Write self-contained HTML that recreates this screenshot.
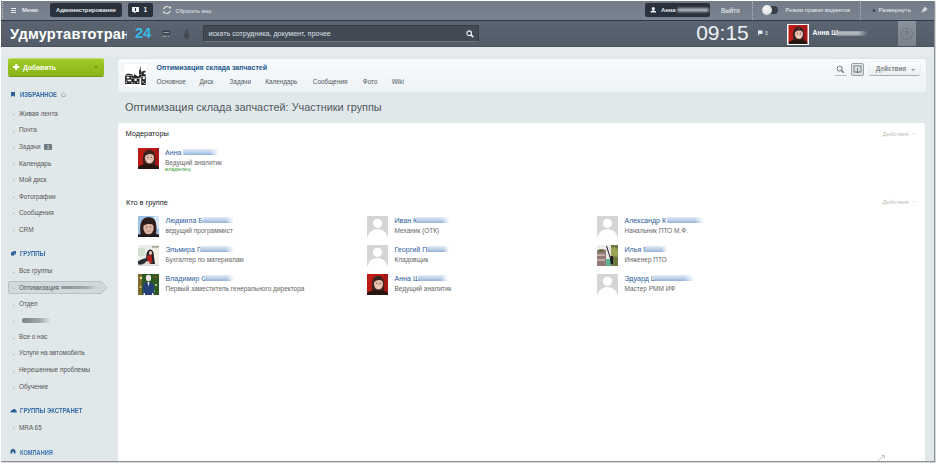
<!DOCTYPE html>
<html><head><meta charset="utf-8">
<style>
*{box-sizing:border-box;margin:0;padding:0}
html,body{width:937px;height:464px;overflow:hidden;background:#fff;font-family:"Liberation Sans",sans-serif}
.a{position:absolute;white-space:nowrap;line-height:1}
#page{position:absolute;left:0;top:0;width:934px;height:461px;overflow:hidden}
.tb{color:#e9edf0;font-weight:bold}
.dbtn{position:absolute;background:#29313c;border-radius:2px}
.side{font-size:6.4px;color:#555}
.dot{position:absolute;width:1px;height:1px;background:#a0a7ab}
.sh{font-size:6.9px;font-weight:bold;color:#336aa6;transform-origin:0 0;transform:scaleX(0.86)}
.nm{font-size:7.1px;color:#2a5d9a}
.ps{font-size:6.5px;color:#666}
.av{position:absolute;width:21px;height:21px;background:#d5d5d5;overflow:hidden}
.av svg{display:block}
.blur{position:absolute;height:4px;border-radius:2px;background:#a9c1de;filter:blur(0.9px)}
.bn{height:5.5px;background:linear-gradient(#e2eaf4,#b9cde6 60%,#93b2da);filter:blur(0.7px);border-radius:1px;-webkit-mask-image:linear-gradient(to right,#000 75%,transparent)}
.gm{font-size:6.4px;color:#505860}
</style></head><body>
<svg width="0" height="0" style="position:absolute"><defs><filter id="bl" x="-10%" y="-10%" width="120%" height="120%"><feGaussianBlur stdDeviation="0.45"/></filter><clipPath id="cp"><rect width="21" height="21"/></clipPath></defs></svg>
<div id="page">
  <!-- page background -->
  <div class="a" style="left:1px;top:1px;width:933px;height:460px;background:#e1e8ea"></div><div class="a" style="left:1px;top:47px;width:933px;height:11px;background:linear-gradient(#e6ebee,#e3e9ec)"></div>
  <!-- TOP BAR -->
  <div class="a" style="left:1px;top:1px;width:933px;height:19px;background:linear-gradient(#727c88,#7a8490)"></div>
  <div class="a" style="left:1px;top:20px;width:933px;height:1px;background:#303845"></div>
  <div class="a" style="left:2px;top:2px;height:17px;border-left:1px dotted #c3c8ce"></div>
  <svg class="a" style="left:11px;top:8px" width="6" height="5"><rect x="0" y="0" width="5" height="1" fill="#e4e8ec"/><rect x="0" y="2" width="5" height="1" fill="#e4e8ec"/><rect x="0" y="4" width="5" height="1" fill="#e4e8ec"/></svg>
  <div class="a tb" style="left:22px;top:8.3px;font-size:5.7px;color:#e4e9ee">Меню</div>
  <div class="dbtn" style="left:50px;top:3px;width:72px;height:14px"></div>
  <div class="a tb" style="left:56px;top:8.3px;font-size:5.8px;color:#e6eaee">Администрирование</div>
  <div class="dbtn" style="left:128px;top:3px;width:25px;height:14px"></div>
  <svg class="a" style="left:132px;top:7px" width="8" height="7"><rect x="0" y="0" width="7" height="5" fill="#eef1f3"/><path d="M2 5 L4 5 L2.5 6.5Z" fill="#eef1f3"/><rect x="3" y="1" width="1" height="3" fill="#29313c"/></svg>
  <div class="a tb" style="left:143.5px;top:7.3px;font-size:6.5px;color:#f0f2f4">1</div>
  <svg class="a" style="left:162px;top:5px" width="10" height="10"><path d="M1.6 4.3 A3.6 3.6 0 0 1 8 3" fill="none" stroke="#dfe3e7" stroke-width="1.1"/><path d="M8.4 5.7 A3.6 3.6 0 0 1 2 7" fill="none" stroke="#dfe3e7" stroke-width="1.1"/><path d="M6.5 3.2 L9 3.6 L8.7 1Z" fill="#dfe3e7"/><path d="M3.5 6.8 L1 6.4 L1.3 9Z" fill="#dfe3e7"/></svg>
  <div class="a" style="left:175.5px;top:9px;font-size:5.5px;color:#e8ecf0">Сбросить кеш</div>

  <div class="dbtn" style="left:645px;top:3px;width:65px;height:14px"></div>
  <svg class="a" style="left:650px;top:7px" width="7" height="6"><circle cx="3.3" cy="1.6" r="1.5" fill="#eef1f3"/><rect x="2.4" y="1.5" width="1.8" height="3" fill="#eef1f3"/><rect x="0.6" y="4" width="5.4" height="1.5" fill="#eef1f3"/></svg>
  <div class="a tb" style="left:661px;top:8px;font-size:5.8px;color:#e6eaee">Анна</div>
  <div class="blur" style="left:677px;top:8px;width:32px;height:4px;background:#aab1ba"></div>
  <div class="a" style="left:721px;top:8px;font-size:6.3px;color:#eef1f4">Выйти</div>
  <div class="a" style="left:752px;top:2px;height:18px;border-left:1px dotted #b0b7be"></div>
  <div class="a" style="left:762px;top:6px;width:16px;height:8px;background:#383f49;border-radius:4px"></div>
  <div class="a" style="left:761.5px;top:5px;width:10px;height:10px;background:radial-gradient(circle at 40% 35%,#fafafa,#cfd2d6);border-radius:50%"></div>
  <div class="a" style="left:785.5px;top:7.6px;font-size:5.75px;color:#e6eaee">Режим правки виджетов</div>
  <div class="a" style="left:860px;top:2px;height:18px;border-left:1px dotted #b0b7be"></div>
  <svg class="a" style="left:873px;top:9px" width="3" height="3"><path d="M0 0 L3 1.5 L0 3Z" fill="#2f3640"/></svg>
  <div class="a" style="left:878.5px;top:7px;font-size:6.1px;color:#eef1f4">Развернуть</div>
  <svg class="a" style="left:919.5px;top:6px" width="8" height="7"><path d="M4.5 0.3 L7.7 3.3 L6.6 3.8 L5.4 5.6 L4.8 5 L1 7 L3 3.6 L2.5 3 L4.3 1.7Z" fill="#d5d9dd"/></svg>

  <!-- HEADER -->
  <div class="a" style="left:1px;top:21px;width:933px;height:26px;background:linear-gradient(#5b6572,#525c69)"></div>
  <div class="a" style="left:1px;top:46px;width:933px;height:1px;background:#4a525d"></div>
  <div class="a" style="left:1px;top:21px;width:126px;height:26px;overflow:hidden">
    <div class="a" style="left:9.1px;top:6px;font-size:14.6px;font-weight:bold;color:#fff;letter-spacing:0.2px">Удмуртавтотранс</div>
  </div>
  <div class="a" style="left:135px;top:26.1px;font-size:14.6px;font-weight:bold;color:#3cb8e6">24</div>
  <div class="a" style="left:0;top:21px"></div>
  <svg class="a" style="left:162px;top:30px" width="9" height="9"><rect x="0.5" y="0.5" width="7.5" height="4" fill="#39404a"/><rect x="1.5" y="2" width="5.5" height="1" fill="#9aa1a9"/><rect x="0.5" y="6" width="4.5" height="1" fill="#8e959d"/><rect x="6" y="6" width="1.5" height="1" fill="#8e959d"/></svg>
  <svg class="a" style="left:182px;top:29px" width="9" height="11"><circle cx="4.5" cy="1.5" r="1" fill="#353c46"/><path d="M4.5 2 C2.5 2 2.3 4 2.3 6 L1 8.5 L8 8.5 L6.7 6 C6.7 4 6.5 2 4.5 2Z" fill="#424953"/><circle cx="4.5" cy="9.5" r="0.9" fill="#3a414b"/></svg>
  <div class="a" style="left:203px;top:25px;width:276px;height:17px;background:#414955;border:1px solid #363d47;border-bottom-color:#6c747e;border-radius:1px"></div>
  <div class="a" style="left:208.5px;top:30.5px;font-size:7.15px;color:#dde2e7">искать сотрудника, документ, прочее</div>
  <svg class="a" style="left:466px;top:29.5px" width="9" height="8"><circle cx="3.2" cy="3.2" r="2.3" fill="none" stroke="#eef0f2" stroke-width="1.2"/><path d="M4.8 4.8 L7.3 7.2" stroke="#eef0f2" stroke-width="1.6"/></svg>

  <div class="a" style="left:696.2px;top:21.5px;font-size:21px;color:#eef1f4">09:15</div>
  <svg class="a" style="left:757px;top:30px" width="12" height="6"><rect x="1" y="0.5" width="4.5" height="3.5" fill="#e6e9ec"/><rect x="1" y="0.5" width="0.8" height="5" fill="#e6e9ec"/><text x="8" y="5" font-size="5" fill="#e6e9ec" font-family="Liberation Sans">0</text></svg>
  <div class="a" style="left:786.5px;top:23.5px;width:22px;height:21px;background:#fdfdfd;padding:1px">
    <svg width="20" height="19" viewBox="0 0 21 21"><g filter="url(#bl)" clip-path="url(#cp)"><rect x="-1" y="-1" width="23" height="23" fill="#bd1d17"/><rect x="17" y="-1" width="5" height="23" fill="#a51612"/><path d="M5.5 17 C4 11 5 5 7.5 3 C10 1 14 1.5 15.8 4 C17.5 6.5 17.5 12 17 17Z" fill="#3d2420"/><ellipse cx="11.5" cy="9.8" rx="4.6" ry="5.8" fill="#e3bcab"/><path d="M7 6.5 C8.5 3.2 13.5 2.8 16 6 L15.6 7.5 C13.5 5.5 9.5 5.5 7.3 8.2Z" fill="#3d2420"/><path d="M-1 22 V19.5 C2 17 6 16 10.5 16 C15 16 19 17 22 19.5 V22Z" fill="#28180f"/><circle cx="9.8" cy="9.2" r="0.55" fill="#4a2c26"/><circle cx="13.2" cy="9.2" r="0.55" fill="#4a2c26"/><path d="M9.8 12.6 Q11.5 13.8 13.2 12.6" stroke="#fff" stroke-width="0.6" fill="none"/></g></svg>
  </div>
  <div class="a tb" style="left:812.5px;top:29.6px;font-size:6.8px;color:#fafbfc">Анна Ш</div>
  <div class="blur" style="left:835px;top:30.8px;width:33px;height:5px;background:linear-gradient(#c9ced4,#9aa2ab);-webkit-mask-image:linear-gradient(to right,#000 70%,transparent)"></div>
  <div class="a" style="left:898px;top:21px;width:18px;height:25px;background:linear-gradient(#8a929b,#7a828c)"></div>
  <div class="a" style="left:901px;top:27.5px;width:12px;height:12px;border:1px dotted #5d656f;border-radius:50%"></div>
  <div class="a" style="left:904.3px;top:29.5px;font-size:8px;color:#4f5660">?</div>

  <!-- SIDEBAR -->
  <div class="a" style="left:8px;top:58px;width:96px;height:17.5px;border-radius:2px;background:linear-gradient(#a2cb2b,#88b416);border-top:1px solid #c0dc6a;box-shadow:0 1px 0 #6e9412"></div>
  <svg class="a" style="left:13px;top:64px" width="7" height="6"><rect x="2.2" y="0" width="2" height="6" fill="#fff"/><rect x="0" y="2" width="6.3" height="2" fill="#fff"/></svg>
  <div class="a" style="left:23px;top:64.9px;font-size:6.8px;font-weight:bold;color:#fbfdf2">Добавить</div>
  <div class="a" style="left:94px;top:66px;width:0;height:0;border-left:2.2px solid transparent;border-right:2.2px solid transparent;border-top:2.2px solid #6b9214"></div>

  <svg class="a" style="left:11px;top:92px" width="5" height="6"><path d="M0 0 H4 V5 L2 3.6 L0 5Z" fill="#2b5f94"/></svg>
  <div class="a sh" style="left:19.6px;top:91.9px">ИЗБРАННОЕ</div>
  <svg class="a" style="left:61px;top:92px" width="5" height="5"><path d="M2.5 0.5 L4.5 2.2 L4 4.5 L1 4.5 L0.5 2.2Z" fill="none" stroke="#a2aaaf" stroke-width="0.9"/></svg>

  <div class="dot" style="left:13px;top:114px"></div><div class="a side" style="left:19px;top:110.8px">Живая лента</div>
  <div class="dot" style="left:13px;top:131px"></div><div class="a side" style="left:19px;top:127.3px">Почта</div>
  <div class="dot" style="left:13px;top:147px"></div><div class="a side" style="left:19px;top:143.8px">Задачи</div>
  <div class="a" style="left:44.2px;top:144px;width:7.7px;height:6px;background:#737b81;border-radius:1px;font-size:5px;color:#dfe3e6;text-align:center;line-height:6px">1</div>
  <div class="dot" style="left:13px;top:164px"></div><div class="a side" style="left:19px;top:160.5px">Календарь</div>
  <div class="dot" style="left:13px;top:180px"></div><div class="a side" style="left:19px;top:177.1px">Мой диск</div>
  <div class="dot" style="left:13px;top:197px"></div><div class="a side" style="left:19px;top:193.7px">Фотографии</div>
  <div class="dot" style="left:13px;top:213px"></div><div class="a side" style="left:19px;top:210.3px">Сообщения</div>
  <div class="dot" style="left:13px;top:230px"></div><div class="a side" style="left:19px;top:226.8px">CRM</div>

  <svg class="a" style="left:11px;top:251px" width="5" height="5"><rect x="0" y="1.2" width="3.3" height="3.3" fill="#2b5f94"/><rect x="1.7" y="0" width="3.3" height="3.3" fill="#3a6ea3"/></svg>
  <div class="a sh" style="left:19.5px;top:250.9px">ГРУППЫ</div>
  <div class="dot" style="left:13px;top:272px"></div><div class="a side" style="left:19px;top:268.3px">Все группы</div>
  <svg class="a" style="left:8px;top:281px" width="100" height="14"><path d="M2 0.5 H93 L99 6.5 L93 12.5 H2 A1.5 1.5 0 0 1 0.5 11 V2 A1.5 1.5 0 0 1 2 0.5Z" fill="#d2d9dc" stroke="#b9c1c5" stroke-width="1"/></svg>
  <div class="dot" style="left:13px;top:288px"></div><div class="a side" style="left:19px;top:284.8px">Оптимизация</div>
  <div class="blur" style="left:61px;top:285.5px;width:36px;height:3.5px;background:linear-gradient(to right,#8d9499,#a3aaaf 70%,rgba(180,186,190,0));filter:blur(0.7px)"></div>
  <div class="dot" style="left:13px;top:305px"></div><div class="a side" style="left:19px;top:301.3px">Отдел</div>
  <div class="dot" style="left:13px;top:321px"></div><div class="blur" style="left:21.5px;top:318px;width:29px;height:4.5px;background:linear-gradient(to right,#7d8489,#a0a7ac 60%,rgba(190,196,200,0));filter:blur(0.6px)"></div>
  <div class="dot" style="left:13px;top:338px"></div><div class="a side" style="left:19px;top:334.3px">Все о нас</div>
  <div class="dot" style="left:13px;top:354px"></div><div class="a side" style="left:19px;top:350.3px">Услуги на автомобиль</div>
  <div class="dot" style="left:13px;top:371px"></div><div class="a side" style="left:19px;top:367.1px">Нерешенные проблемы</div>
  <div class="dot" style="left:13px;top:388px"></div><div class="a side" style="left:19px;top:383.8px">Обучение</div>

  <svg class="a" style="left:10px;top:408px" width="7" height="5"><path d="M0.5 4.5 C0.5 2.5 1.5 2 2.5 2 C3 0.5 5.5 0.5 6 2.3 C6.6 2.5 6.8 3.5 6.8 4.5Z" fill="#2b5f94"/></svg>
  <div class="a sh" style="left:20px;top:408.1px;transform:scaleX(0.865)">ГРУППЫ ЭКСТРАНЕТ</div>
  <div class="dot" style="left:13px;top:428px"></div><div class="a side" style="left:19px;top:425.3px">MRA 65</div>
  <svg class="a" style="left:10px;top:448px" width="6" height="6"><path d="M0.5 5.5 V2.5 L3 0.5 L5.5 2.5 V5.5 H3.8 V3.8 H2.2 V5.5Z" fill="#2b5f94"/></svg>
  <div class="a sh" style="left:20px;top:449.6px;transform:scaleX(0.82);color:#3d74b0">КОМПАНИЯ</div>

  <!-- GROUP HEADER PANEL -->
  <div class="a" style="left:118px;top:59px;width:808px;height:32.5px;background:linear-gradient(#f9fbfc,#edf2f6);border-radius:3px;box-shadow:0 -0.5px 0 0.5px #dde3e6"></div>
  <div class="a" style="left:123px;top:63px;width:25px;height:25px;background:#fff;border:1px solid #f0f2f3"></div>
  <svg class="a" style="left:123px;top:63px" width="25" height="25" viewBox="0 0 25 25">
    <g fill="#262626">
      <path d="M2 21 V13.5 C2 11.5 3.5 10.6 5.5 10.8 C8 10.6 10 11.5 10.5 13 V21Z"/>
      <path d="M10 21 V14 L11 12.5 L11.5 10.5 L12.2 12.5 L13 11 L13.5 13 L16.5 13.5 V21Z"/>
      <path d="M16 14.5 V8 L16.6 7 L17.2 2.5 L17.8 7 L18.4 8 V14.5Z"/>
      <path d="M18.2 22 V10.5 C18.5 8.5 20 7.5 22.5 7.8 V9.2 C21 9.2 20.6 10 20.8 11 L22.8 11.5 V22Z"/>
    </g>
    <g fill="#f4f4f4">
      <ellipse cx="5" cy="14.6" rx="1.6" ry="1"/><ellipse cx="6.5" cy="17.5" rx="2" ry="1.1"/><circle cx="3.3" cy="19.2" r="0.8"/>
      <ellipse cx="12.5" cy="17" rx="1.5" ry="1"/><circle cx="14.8" cy="19.3" r="0.8"/>
      <ellipse cx="20.8" cy="15" rx="1.2" ry="1.4"/><circle cx="20" cy="19" r="0.8"/>
      <rect x="2" y="12.4" width="8" height="0.5"/><rect x="16" y="11.5" width="2.4" height="0.5"/><circle cx="8.8" cy="15" r="0.7"/><circle cx="4" cy="17" r="0.6"/><ellipse cx="9" cy="19.8" rx="1.2" ry="0.6"/><circle cx="11.5" cy="20" r="0.6"/><rect x="10.5" y="15" width="5.5" height="0.5"/><circle cx="21.5" cy="20.5" r="0.6"/><rect x="18.2" y="13" width="4.5" height="0.5"/>
    </g>
  </svg>
  <div class="a" style="left:156.5px;top:64.3px;font-size:7.05px;font-weight:bold;color:#25588f">Оптимизация склада запчастей</div>
  <div class="a gm" style="left:156.5px;top:78.9px">Основное</div>
  <div class="a gm" style="left:199.5px;top:78.9px">Диск</div>
  <div class="a gm" style="left:229.5px;top:78.9px">Задачи</div>
  <div class="a gm" style="left:265.2px;top:78.9px">Календарь</div>
  <div class="a gm" style="left:312.8px;top:78.9px">Сообщения</div>
  <div class="a gm" style="left:362.8px;top:78.9px">Фото</div>
  <div class="a gm" style="left:391.8px;top:78.9px">Wiki</div>

  <div class="a" style="left:834.5px;top:62.5px;width:12px;height:12.3px;border-radius:1px;background:linear-gradient(#fdfefe,#eef2f4);box-shadow:0 1px 0 #b9c0c5"></div>
  <svg class="a" style="left:836px;top:65px" width="9" height="9"><circle cx="3.6" cy="3.6" r="2.5" fill="none" stroke="#6c7379" stroke-width="1"/><path d="M5.3 5.3 L7.8 7.8" stroke="#6c7379" stroke-width="1.4"/></svg>
  <div class="a" style="left:851px;top:63px;width:13px;height:13px;border:1px solid #9ba2a7;border-radius:2px;background:linear-gradient(#e4e8ea,#d9dfe2)"></div>
  <svg class="a" style="left:853px;top:65px" width="9" height="9"><rect x="1" y="1" width="7" height="6" fill="none" stroke="#6e757b" stroke-width="0.9"/><path d="M4.5 3 V8 M3.3 6.8 L4.5 8 L5.7 6.8" fill="none" stroke="#6e757b" stroke-width="0.9"/></svg>
  <div class="a" style="left:869px;top:62.3px;width:50.5px;height:12.5px;background:linear-gradient(#fdfefe,#e9edef);border-radius:2px;box-shadow:0 1px 0 #a9b0b5,0 0 0 0.5px #dfe3e6"></div>
  <div class="a" style="left:875.8px;top:66.3px;font-size:6.4px;font-weight:bold;color:#80878c">Действия</div>
  <div class="a" style="left:910.5px;top:68.5px;width:0;height:0;border-left:2px solid transparent;border-right:2px solid transparent;border-top:2px solid #8c9398"></div>

  <div class="a" style="left:125px;top:102px;font-size:10.9px;color:#50585f">Оптимизация склада запчастей: Участники группы</div>

  <!-- CARD -->
  <div class="a" style="left:118px;top:123px;width:807px;height:345px;background:#fff;border-radius:3px"></div>
  <div class="a" style="left:125.6px;top:130.4px;font-size:7.35px;color:#1c1c1c">Модераторы</div>
  <div class="a" style="left:882.5px;top:131px;font-size:6px;color:#bdbdb3">Действия</div>
  <div class="a" style="left:913px;top:133.3px;width:0;height:0;border-left:1.5px solid transparent;border-right:1.5px solid transparent;border-top:1.5px solid #b5b5b5"></div>
  <div class="av" style="left:138px;top:148px"><svg width="21" height="21" viewBox="0 0 21 21"><g filter="url(#bl)" clip-path="url(#cp)"><rect x="-1" y="-1" width="23" height="23" fill="#bd1d17"/><rect x="17" y="-1" width="5" height="23" fill="#a51612"/><path d="M5.5 17 C4 11 5 5 7.5 3 C10 1 14 1.5 15.8 4 C17.5 6.5 17.5 12 17 17Z" fill="#3d2420"/><ellipse cx="11.5" cy="9.8" rx="4.6" ry="5.8" fill="#e3bcab"/><path d="M7 6.5 C8.5 3.2 13.5 2.8 16 6 L15.6 7.5 C13.5 5.5 9.5 5.5 7.3 8.2Z" fill="#3d2420"/><path d="M-1 22 V19.5 C2 17 6 16 10.5 16 C15 16 19 17 22 19.5 V22Z" fill="#28180f"/><circle cx="9.8" cy="9.2" r="0.55" fill="#4a2c26"/><circle cx="13.2" cy="9.2" r="0.55" fill="#4a2c26"/><path d="M9.8 12.6 Q11.5 13.8 13.2 12.6" stroke="#fff" stroke-width="0.6" fill="none"/></g></svg></div>
  <div class="a nm" style="left:165px;top:149.9px">Анна</div><div class="blur bn" style="left:183px;top:149.2px;width:36px"></div>
  <div class="a ps" style="left:165px;top:160.2px">Ведущий аналитик</div>
  <div class="a" style="left:165px;top:167.4px;font-size:5.7px;color:#2f9a2f">владелец</div>

  <div class="a" style="left:126px;top:198.8px;font-size:7.3px;color:#1c1c1c">Кто в группе</div>
  <div class="a" style="left:882.5px;top:199px;font-size:6px;color:#bdbdb3">Действия</div>
  <div class="a" style="left:913px;top:201.3px;width:0;height:0;border-left:1.5px solid transparent;border-right:1.5px solid transparent;border-top:1.5px solid #b5b5b5"></div>

  <!-- col1 -->
  <div class="av" style="left:138px;top:216px"><svg width="21" height="21" viewBox="0 0 21 21"><g filter="url(#bl)" clip-path="url(#cp)"><rect x="-1" y="-1" width="23" height="23" fill="#9cc3e3"/><ellipse cx="18.5" cy="6" rx="4" ry="7" fill="#d2e6f4"/><path d="M3 20 C1.5 13 2 5 6 2.5 C9 0.5 13.5 0.8 16 3 C18.5 5.5 19 12 18 20Z" fill="#2d1f1b"/><ellipse cx="10.5" cy="12" rx="5.2" ry="6.3" fill="#dcb2a2"/><path d="M5 8.5 C6.5 4.5 14 4 16.5 8 L16 9.5 C13.5 7.5 8 7.5 5.5 10Z" fill="#2d1f1b"/><path d="M-1 22 V19 C2 17 5 19.5 10.5 19.5 C16 19.5 19 17 22 19 V22Z" fill="#1b1b1d"/><circle cx="8.5" cy="11" r="0.6" fill="#4a2c26"/><circle cx="12.5" cy="11" r="0.6" fill="#4a2c26"/><path d="M8.8 15 Q10.5 16 12.2 15" stroke="#b07a6c" stroke-width="0.6" fill="none"/></g></svg></div>
  <div class="a nm" style="left:165.5px;top:217.9px">Людмила Б</div><div class="blur bn" style="left:203px;top:217.2px;width:31px"></div>
  <div class="a ps" style="left:165.5px;top:228.2px">ведущий программист</div>

  <div class="av" style="left:138px;top:245px"><svg width="21" height="21" viewBox="0 0 21 21"><g filter="url(#bl)" clip-path="url(#cp)"><rect x="-1" y="-1" width="23" height="23" fill="#eceee9"/><rect x="-1" y="3" width="8" height="8" fill="#d3dfcf"/><rect x="15" y="-1" width="7" height="23" fill="#f2eee6"/><rect x="14" y="1.5" width="7" height="0.8" fill="#555"/><path d="M8 16 C8 9 9 5 12 4.5 C15 4.5 16 8 16 12 L17 19 L13 19Z" fill="#24232a"/><path d="M9 10.5 L13.5 10 L14.5 18 L9 18.5Z" fill="#b3241d"/><path d="M-1 22 V17 C2 15 5 13.5 9 13 L10 17 C7 18 4 19 2 22Z" fill="#2a2d36"/><ellipse cx="9.5" cy="17.5" rx="2.2" ry="1.3" fill="#ecd6cc"/><ellipse cx="12.5" cy="8" rx="1.6" ry="2" fill="#e3c2b2"/><rect x="-1" y="19.5" width="23" height="3" fill="#dadad6"/></g></svg></div>
  <div class="a nm" style="left:165.5px;top:246.9px">Эльмира Г</div><div class="blur bn" style="left:200px;top:246.2px;width:34px"></div>
  <div class="a ps" style="left:165.5px;top:257.2px">Бухгалтер по материалам</div>

  <div class="av" style="left:138px;top:274px"><svg width="21" height="21" viewBox="0 0 21 21"><g filter="url(#bl)" clip-path="url(#cp)"><rect x="-1" y="-1" width="23" height="23" fill="#2e5a22"/><rect x="-1" y="-1" width="5" height="23" fill="#7d6a2c"/><circle cx="3" cy="4" r="1.3" fill="#e0dc8a"/><circle cx="2.5" cy="13" r="1" fill="#d8c77a"/><circle cx="17.5" cy="3" r="1.1" fill="#b94a3a"/><circle cx="18" cy="11" r="1" fill="#e2dcb0"/><circle cx="16" cy="17" r="0.8" fill="#c8d890"/><ellipse cx="10.5" cy="4" rx="2.6" ry="3.2" fill="#ece8e5"/><path d="M5 22 V12.5 C5 9.5 7 8 10.5 8 C14 8 16 9.5 16 12.5 V22Z" fill="#26407a"/><path d="M9.5 8 L11.5 8 L10.5 13Z" fill="#f2f2f2"/><rect x="5.5" y="19" width="1.5" height="3" fill="#e8e4e0"/><rect x="14" y="19" width="1.5" height="3" fill="#e8e4e0"/></g></svg></div>
  <div class="a nm" style="left:165.5px;top:275.9px">Владимир С</div><div class="blur bn" style="left:204px;top:275.2px;width:30px"></div>
  <div class="a ps" style="left:165.5px;top:286.2px">Первый заместитель генерального директора</div>

  <!-- col2 -->
  <div class="av" style="left:367px;top:216px"><svg width="21" height="21" viewBox="0 0 21 21"><rect width="21" height="21" fill="#d5d5d5"/><circle cx="10.5" cy="7.3" r="4.6" fill="#fff"/><ellipse cx="10.5" cy="22" rx="10" ry="9" fill="#fff"/></svg></div>
  <div class="a nm" style="left:394.5px;top:217.9px">Иван К</div><div class="blur bn" style="left:416px;top:217.2px;width:34px"></div>
  <div class="a ps" style="left:394.5px;top:228.2px">Механик (ОТК)</div>

  <div class="av" style="left:367px;top:245px"><svg width="21" height="21" viewBox="0 0 21 21"><rect width="21" height="21" fill="#d5d5d5"/><circle cx="10.5" cy="7.3" r="4.6" fill="#fff"/><ellipse cx="10.5" cy="22" rx="10" ry="9" fill="#fff"/></svg></div>
  <div class="a nm" style="left:394.5px;top:246.9px">Георгий П</div><div class="blur bn" style="left:427px;top:246.2px;width:22px"></div>
  <div class="a ps" style="left:394.5px;top:257.2px">Кладовщик</div>

  <div class="av" style="left:367px;top:274px"><svg width="21" height="21" viewBox="0 0 21 21"><g filter="url(#bl)" clip-path="url(#cp)"><rect x="-1" y="-1" width="23" height="23" fill="#bd1d17"/><rect x="17" y="-1" width="5" height="23" fill="#a51612"/><path d="M5.5 17 C4 11 5 5 7.5 3 C10 1 14 1.5 15.8 4 C17.5 6.5 17.5 12 17 17Z" fill="#3d2420"/><ellipse cx="11.5" cy="9.8" rx="4.6" ry="5.8" fill="#e3bcab"/><path d="M7 6.5 C8.5 3.2 13.5 2.8 16 6 L15.6 7.5 C13.5 5.5 9.5 5.5 7.3 8.2Z" fill="#3d2420"/><path d="M-1 22 V19.5 C2 17 6 16 10.5 16 C15 16 19 17 22 19.5 V22Z" fill="#28180f"/><circle cx="9.8" cy="9.2" r="0.55" fill="#4a2c26"/><circle cx="13.2" cy="9.2" r="0.55" fill="#4a2c26"/><path d="M9.8 12.6 Q11.5 13.8 13.2 12.6" stroke="#fff" stroke-width="0.6" fill="none"/></g></svg></div>
  <div class="a nm" style="left:394.5px;top:275.9px">Анна Ш</div><div class="blur bn" style="left:418px;top:275.2px;width:30px"></div>
  <div class="a ps" style="left:394.5px;top:286.2px">Ведущий аналитик</div>

  <!-- col3 -->
  <div class="av" style="left:597px;top:216px"><svg width="21" height="21" viewBox="0 0 21 21"><rect width="21" height="21" fill="#d5d5d5"/><circle cx="10.5" cy="7.3" r="4.6" fill="#fff"/><ellipse cx="10.5" cy="22" rx="10" ry="9" fill="#fff"/></svg></div>
  <div class="a nm" style="left:624.5px;top:217.9px">Александр К</div><div class="blur bn" style="left:667px;top:217.2px;width:37px"></div>
  <div class="a ps" style="left:624.5px;top:228.2px">Начальник ПТО М.Ф.</div>

  <div class="av" style="left:597px;top:245px"><svg width="21" height="21" viewBox="0 0 21 21"><g filter="url(#bl)" clip-path="url(#cp)"><rect x="-1" y="-1" width="23" height="23" fill="#a89a8e"/><rect x="-1" y="-1" width="10" height="7" fill="#f0f0ec"/><path d="M-1 6 C2 4 6 4 9 5 V22 H-1Z" fill="#8f7a74"/><path d="M0 9 H8 V11 H0Z M0 14 H8 V16 H0Z" fill="#c2aca4"/><path d="M1 5 C3 4 5 4 7 5 L6 7 L2 7Z" fill="#6b6a3a"/><rect x="14" y="-1" width="8" height="23" fill="#6d793c"/><path d="M14 3 C17 1 21 3 21 6 V12 C18 11 16 12 14 13Z" fill="#9aa256"/><path d="M9 -1 H14 V14 H9Z" fill="#e9e9ea"/><path d="M9 14 H14 V22 H9Z" fill="#5bb597"/><path d="M9.5 1 L13 12 L14 16" fill="none" stroke="#222" stroke-width="1"/><rect x="13.5" y="11" width="2.5" height="8" fill="#1f1f22"/></g></svg></div>
  <div class="a nm" style="left:624.5px;top:246.9px">Илья П</div><div class="blur bn" style="left:645px;top:246.2px;width:22px"></div>
  <div class="a ps" style="left:624.5px;top:257.2px">Инженер ПТО</div>

  <div class="av" style="left:597px;top:274px"><svg width="21" height="21" viewBox="0 0 21 21"><rect width="21" height="21" fill="#d5d5d5"/><circle cx="10.5" cy="7.3" r="4.6" fill="#fff"/><ellipse cx="10.5" cy="22" rx="10" ry="9" fill="#fff"/></svg></div>
  <div class="a nm" style="left:624.5px;top:275.9px">Эдуард Ш</div><div class="blur bn" style="left:654px;top:275.2px;width:40px"></div>
  <div class="a ps" style="left:624.5px;top:286.2px">Мастер РММ ИФ</div>

  <svg class="a" style="left:877px;top:454px" width="9" height="8"><path d="M1 7 L7 1.5 M4.5 1.5 H7.5 V4.5" fill="none" stroke="#b9bfc3" stroke-width="0.9"/></svg>
</div>
<!-- frame shadow -->
<div class="a" style="left:934px;top:1px;width:1px;height:461px;background:#8e9194"></div>
<div class="a" style="left:1px;top:461px;width:934px;height:1px;background:#8e9194"></div>
<div class="a" style="left:935px;top:2px;width:1px;height:461px;background:#d6d8d9"></div>
<div class="a" style="left:2px;top:462px;width:934px;height:1px;background:#d6d8d9"></div>
</body></html>
